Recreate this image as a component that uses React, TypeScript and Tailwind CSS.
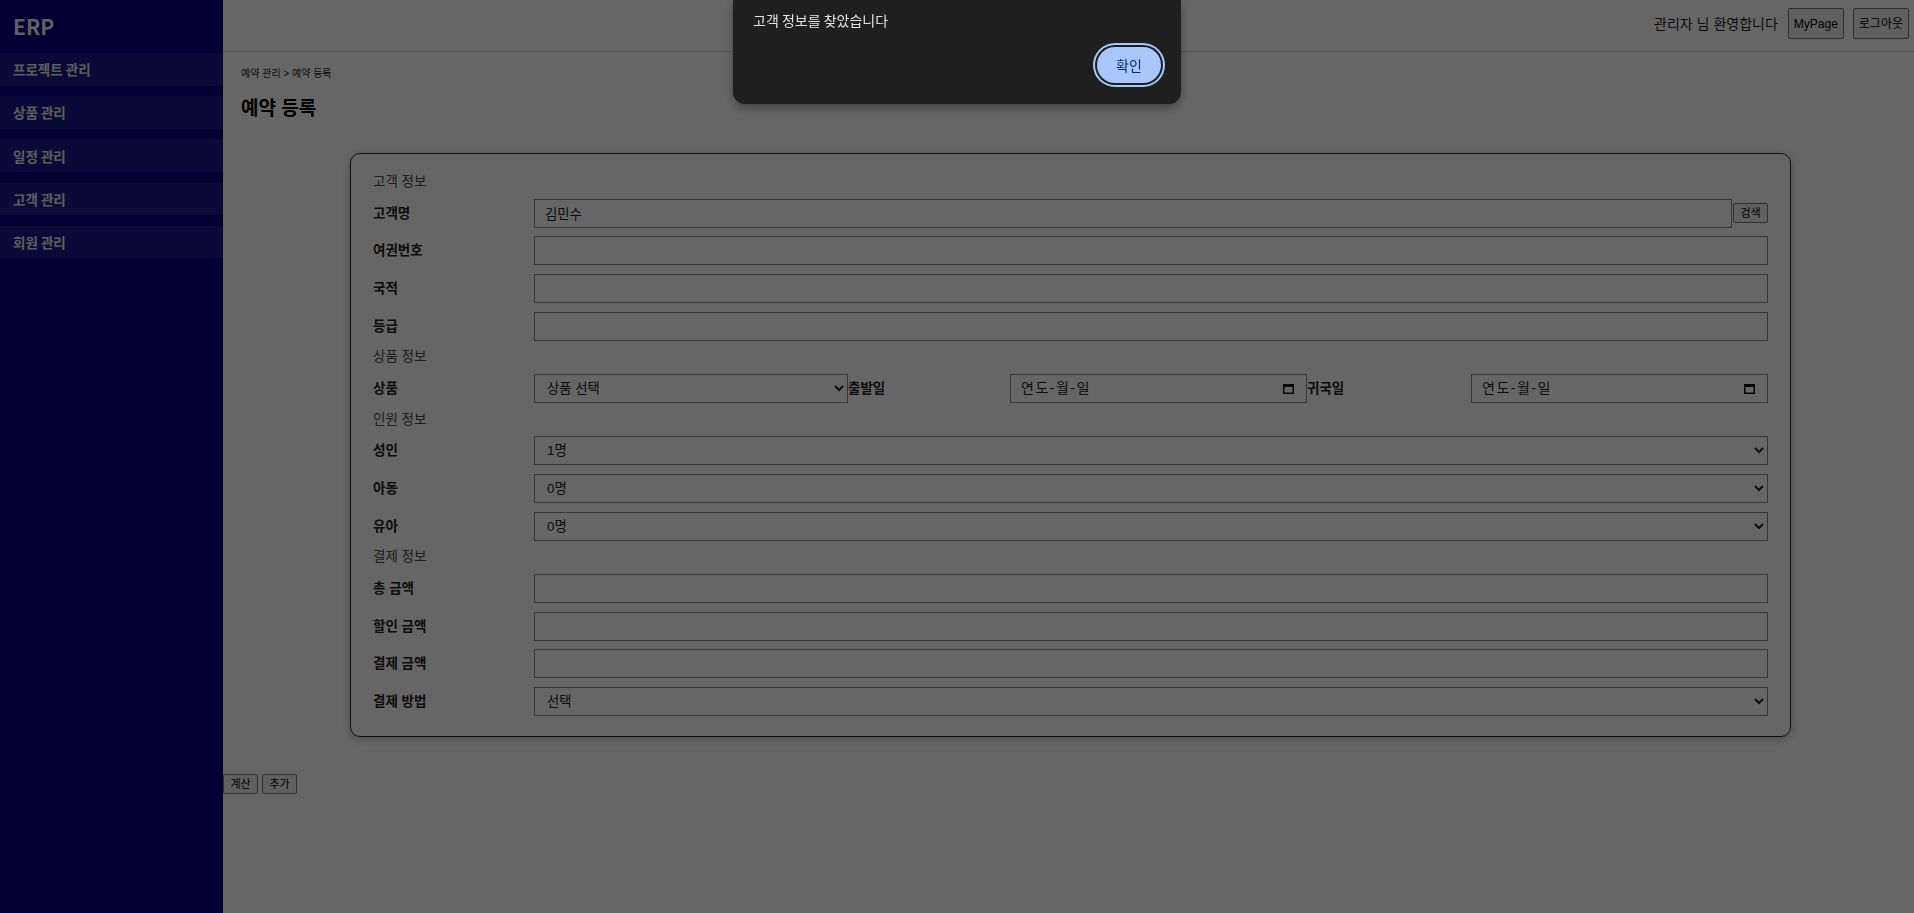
import React from 'react';

const FONT = "font-['Liberation_Sans','Noto_Sans_CJK_KR',sans-serif]";

const menuItems = ['프로젝트 관리', '상품 관리', '일정 관리', '고객 관리', '회원 관리'];

const labelCls =
  'w-[161px] shrink-0 text-[13.5px] font-bold leading-[17px] text-[#222]';
const fieldCls =
  'h-[29px] min-w-0 border border-[#8a8a8a] bg-white px-[10px] text-[13.33px] leading-[17px] text-[#222] outline-none';
const sectionCls = 'text-[13.5px] leading-[16px] text-[#4a4a4a]';
const smallBtn =
  'h-[20px] rounded-[2px] border border-[#767676] bg-[#efefef] px-[5px] text-[11px] leading-[16px] text-black';

function CalendarIcon(): React.ReactElement {
  return (
    <svg width="11" height="12" viewBox="0 0 11 12" className="text-[#111]">
      <rect x="0.75" y="2.75" width="9.5" height="8.5" fill="none" stroke="currentColor" strokeWidth="1.5" />
      <rect x="0" y="2" width="11" height="3" fill="currentColor" />
    </svg>
  );
}

function DateField(): React.ReactElement {
  return (
    <div className={`${fieldCls} flex flex-1 items-center justify-between pr-[12px]`}>
      <span className="text-[14px] tracking-[1.5px]">연도-월-일</span>
      <CalendarIcon />
    </div>
  );
}

function TextRow({ label, value }: { label: string; value?: string }): React.ReactElement {
  return (
    <div className="flex items-center">
      <span className={labelCls}>{label}</span>
      <input className={`${fieldCls} flex-1`} defaultValue={value ?? ''} />
    </div>
  );
}

function SelectRow({ label, options }: { label: string; options: string[] }): React.ReactElement {
  return (
    <div className="flex items-center">
      <span className={labelCls}>{label}</span>
      <select className={`${fieldCls} flex-1 pl-[8px]`} defaultValue={options[0]}>
        {options.map((o) => (
          <option key={o}>{o}</option>
        ))}
      </select>
    </div>
  );
}

export default function App(): React.ReactElement {
  return (
    <div className={`${FONT} relative flex min-h-screen bg-white`}>
      {/* Sidebar */}
      <aside className="w-[223px] shrink-0 bg-[#000080] font-['Noto_Sans_CJK_KR',sans-serif]">
        <div className="flex h-[53px] items-center pl-[13px] text-[21px] font-bold text-[#f0f0f0]">
          ERP
        </div>
        <nav className="flex flex-col gap-[10.7px]">
          {menuItems.map((m) => (
            <div
              key={m}
              className="flex h-[32.5px] items-center bg-white/10 pl-[13px] text-[13.5px] font-bold text-[#e8e8e8]"
            >
              {m}
            </div>
          ))}
        </nav>
      </aside>

      {/* Main */}
      <main className="flex min-w-0 flex-1 flex-col">
        <header className="flex h-[52px] items-center justify-end border-b border-[#d8d8d8] pr-[5px] pb-[4px]">
          <span className="mr-[10px] text-[14px] leading-[20px] text-[#222]">관리자 님 환영합니다</span>
          <button className="h-[31px] rounded-[2px] border border-[#767676] bg-[#efefef] px-[5px] text-[12px] text-black">
            MyPage
          </button>
          <button className="ml-[9px] h-[31px] rounded-[2px] border border-[#767676] bg-[#efefef] px-[5px] text-[12px] text-black">
            로그아웃
          </button>
        </header>

        <section className="px-[18px] pt-[15px] pb-[37px]">
          <p className="text-[10px] leading-[14px] text-[#222]">예약 관리 &gt; 예약 등록</p>
          <h2 className="mt-[16px] text-[19px] font-bold leading-[24px] text-black">예약 등록</h2>

          <div className="pl-[4px]">
            <div className="mx-auto mt-[32px] flex w-[1441px] flex-col gap-[8.67px] rounded-[10px] border border-[#2a2a2a] bg-white px-[22px] pt-[20px] pb-[20px] shadow-[0_2px_8px_rgba(0,0,0,0.25)]">
              <div className={sectionCls}>고객 정보</div>
              <div className="flex items-center">
                <span className={labelCls}>고객명</span>
                <input className={`${fieldCls} flex-1`} defaultValue="김민수" />
                <button className={`${smallBtn} ml-[1px] w-[35px] px-0`}>검색</button>
              </div>
              <TextRow label="여권번호" />
              <TextRow label="국적" />
              <TextRow label="등급" />

              <div className={sectionCls}>상품 정보</div>
              <div className="flex items-center">
                <span className={labelCls}>상품</span>
                <select className={`${fieldCls} w-[314px] pl-[8px]`} defaultValue="상품 선택">
                  <option>상품 선택</option>
                </select>
                <span className={`${labelCls} w-[162px]`}>출발일</span>
                <DateField />
                <span className={`${labelCls} w-[164px]`}>귀국일</span>
                <DateField />
              </div>

              <div className={sectionCls}>인원 정보</div>
              <SelectRow label="성인" options={['1명', '2명', '3명']} />
              <SelectRow label="아동" options={['0명', '1명', '2명']} />
              <SelectRow label="유아" options={['0명', '1명', '2명']} />

              <div className={sectionCls}>결제 정보</div>
              <TextRow label="총 금액" />
              <TextRow label="할인 금액" />
              <TextRow label="결제 금액" />
              <SelectRow label="결제 방법" options={['선택', '카드', '현금']} />
            </div>
          </div>
        </section>

        <div className="flex gap-[4px]">
          <button className={`${smallBtn} w-[35px] px-0`}>계산</button>
          <button className={`${smallBtn} w-[35px] px-0`}>추가</button>
        </div>
      </main>

      {/* alert overlay */}
      <div className="fixed inset-0 z-10 bg-black/60" />
      <div className="fixed top-0 left-1/2 z-20 flex h-[104px] w-[448px] -translate-x-1/2 flex-col rounded-b-[12px] bg-[#1f1f1f] px-[20px] pt-[10px] shadow-[0_4px_10px_rgba(0,0,0,0.35)] font-['Noto_Sans_CJK_KR',sans-serif]">
        <p className="text-[14px] leading-[20px] text-[#e3e3e3]">고객 정보를 찾았습니다</p>
        <div className="mt-[17px] flex justify-end">
          <button className="h-[36px] w-[64px] rounded-full bg-[#a8c7fa] text-[14px] text-[#062e6f] ring-2 ring-[#a8c7fa] ring-offset-2 ring-offset-[#1f1f1f]">
            확인
          </button>
        </div>
      </div>
    </div>
  );
}
